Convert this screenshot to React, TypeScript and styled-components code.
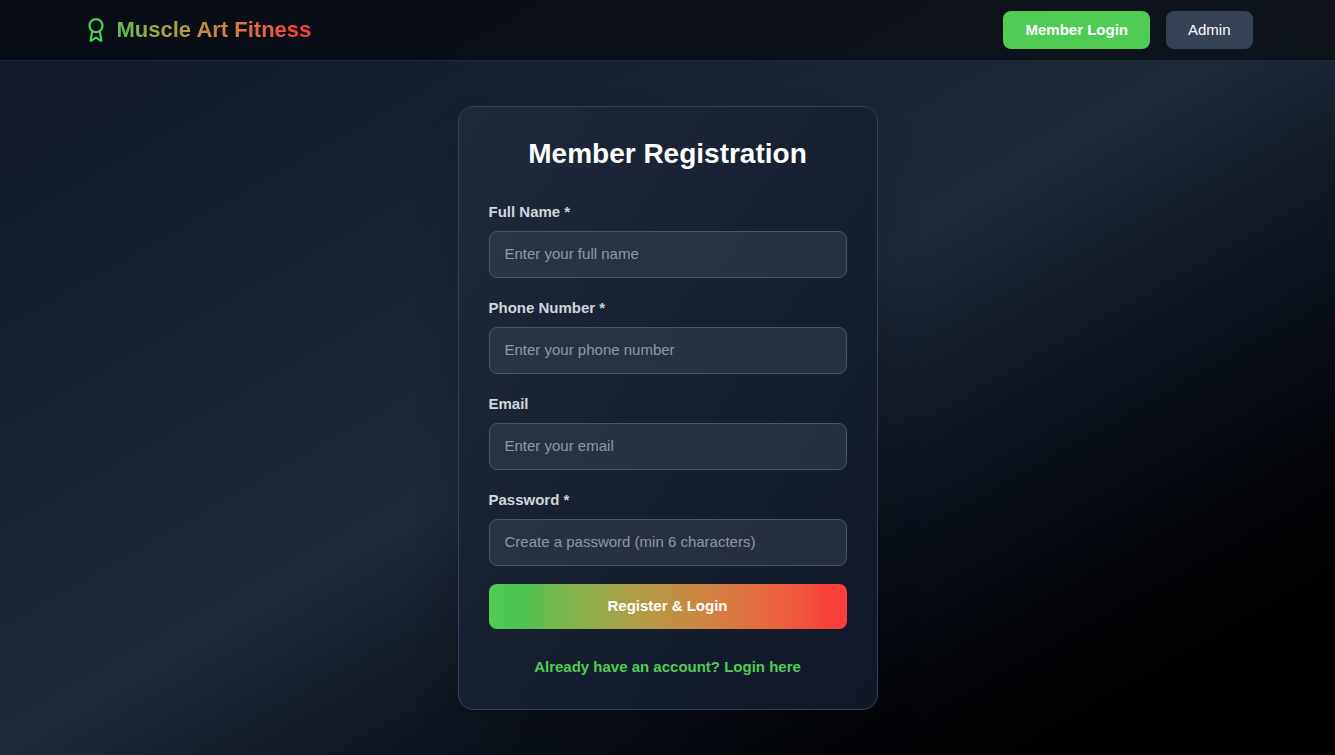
import React from "react";
import styled, { createGlobalStyle } from "styled-components";
import { Award } from "lucide-react";

const GlobalStyle = createGlobalStyle`
  *, *::before, *::after { box-sizing: border-box; }
  body { margin: 0; }
  body, button, input {
    font-family: "Liberation Sans", Arial, Helvetica, sans-serif;
    font-size: 15px;
  }
`;

const accentGradient =
  "linear-gradient(to right in oklab, #50cc55, #4cc14f 10%, #be9143 50%, #fa3f3b 95%, #ff3f3d)";

const Page = styled.div`
  min-height: 100vh;
  display: flex;
  flex-direction: column;
  color: #fff;
  background: linear-gradient(to bottom right in oklab, #101828, #1e2939, #000);
`;

const Header = styled.header`
  border-bottom: 1px solid #1e2939;
  background: rgba(0, 0, 0, 0.5);
`;

const HeaderInner = styled.div`
  max-width: 1200px;
  margin: 0 auto;
  padding: 11px 15px;
  display: flex;
  align-items: center;
  justify-content: space-between;
`;

const Brand = styled.a`
  display: flex;
  align-items: center;
  gap: 8px;
  font-size: 22px;
  line-height: 30px;
  font-weight: 700;
  color: transparent;
  background: ${accentGradient};
  background-clip: text;
  text-decoration: none;
`;

const Nav = styled.nav`
  display: flex;
  gap: 16px;
`;

const NavButton = styled.button<{ $primary?: boolean }>`
  height: 38px;
  padding: 0 22px 2px;
  border: 0;
  border-radius: 8px;
  color: #fff;
  font-weight: ${(p) => (p.$primary ? 700 : 400)};
  background: ${(p) => (p.$primary ? "#50cc55" : "#364153")};
  cursor: pointer;
`;

const Main = styled.main`
  flex: 1;
  display: flex;
  align-items: center;
  justify-content: center;
  padding: 45px 15px;
`;

const Card = styled.section`
  width: 100%;
  max-width: 420px;
  padding: 30px 30px 31px;
  border: 1px solid #364153;
  border-radius: 15px;
  background: linear-gradient(to bottom right in oklab, #1e2939, #101828);
  box-shadow: 0 25px 50px -12px rgba(0, 0, 0, 0.25);
  text-align: center;
`;

const Title = styled.h1`
  margin: 0 0 30px;
  font-size: 28px;
  line-height: 34px;
  font-weight: 700;
`;

const Form = styled.form`
  display: flex;
  flex-direction: column;
  gap: 18px;
  text-align: left;
`;

const Fields = styled.div`
  display: flex;
  flex-direction: column;
  gap: 19px;
`;

const Field = styled.div`
  display: flex;
  flex-direction: column;
  gap: 8px;
`;

const Label = styled.label`
  line-height: 22px;
  font-weight: 700;
  color: #d1d5dc;
`;

const Input = styled.input`
  width: 100%;
  height: 47px;
  padding: 0 15px 2px;
  border: 1px solid #4a5565;
  border-radius: 8px;
  color: #fff;
  background: rgba(54, 65, 83, 0.5);
  &::placeholder { color: rgba(255, 255, 255, 0.5); opacity: 1; }
`;

const Submit = styled.button`
  height: 45px;
  padding: 0 15px 2px;
  border: 0;
  border-radius: 8px;
  color: #fff;
  font-weight: 700;
  background: ${accentGradient};
  cursor: pointer;
`;

const LoginLink = styled.a`
  display: inline-block;
  margin-top: 27px;
  line-height: 22px;
  font-weight: 700;
  color: #50cc55;
  text-decoration: none;
`;

const fields = [
  { id: "name", label: "Full Name *", type: "text", placeholder: "Enter your full name" },
  { id: "phone", label: "Phone Number *", type: "tel", placeholder: "Enter your phone number" },
  { id: "email", label: "Email", type: "email", placeholder: "Enter your email" },
  { id: "password", label: "Password *", type: "password", placeholder: "Create a password (min 6 characters)" },
];

export default function App() {
  return (
    <Page>
      <GlobalStyle />
      <Header>
        <HeaderInner>
          <Brand href="#home">
            <Award size={26} color="#50cc55" aria-hidden />
            <span>Muscle Art Fitness</span>
          </Brand>
          <Nav>
            <NavButton type="button" $primary>Member Login</NavButton>
            <NavButton type="button">Admin</NavButton>
          </Nav>
        </HeaderInner>
      </Header>
      <Main>
        <Card>
          <Title>Member Registration</Title>
          <Form onSubmit={(e) => e.preventDefault()}>
            <Fields>
              {fields.map((f) => (
                <Field key={f.id}>
                  <Label htmlFor={f.id}>{f.label}</Label>
                  <Input id={f.id} name={f.id} type={f.type} placeholder={f.placeholder} />
                </Field>
              ))}
            </Fields>
            <Submit type="submit">Register &amp; Login</Submit>
          </Form>
          <LoginLink href="#login">Already have an account? Login here</LoginLink>
        </Card>
      </Main>
    </Page>
  );
}
